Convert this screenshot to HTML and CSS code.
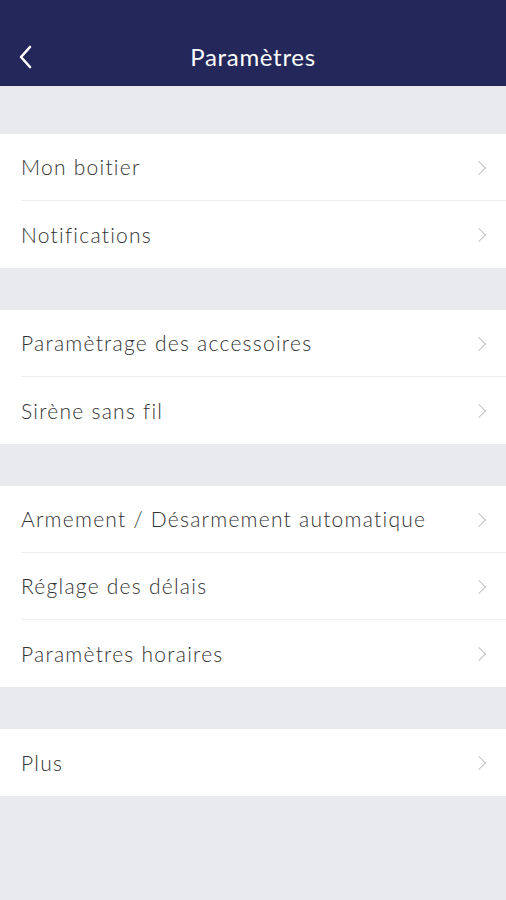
FILE: index.html
```html
<!DOCTYPE html>
<html lang="fr">

<head>
    <meta charset="UTF-8">
    <meta name="viewport" content="width=device-width, initial-scale=1.0">
    <title>Paramètres</title>
    <link rel="stylesheet" href="styles.css">
</head>

<body>
    <header class="nav-bar">
        <svg class="back" width="14" height="24" viewBox="0 0 14 24">
            <path d="M11 2 L2 12 L11 22" fill="none" stroke="#ffffff" stroke-width="2.6" stroke-linecap="round" stroke-linejoin="round"/>
        </svg>
        <h1>Paramètres</h1>
    </header>
    <main>
        <ul class="group">
            <li class="row"><span>Mon boitier</span><i class="chev"></i></li>
            <li class="row"><span>Notifications</span><i class="chev"></i></li>
        </ul>
        <ul class="group">
            <li class="row"><span>Paramètrage des accessoires</span><i class="chev"></i></li>
            <li class="row"><span>Sirène sans fil</span><i class="chev"></i></li>
        </ul>
        <ul class="group">
            <li class="row"><span>Armement / Désarmement automatique</span><i class="chev"></i></li>
            <li class="row"><span>Réglage des délais</span><i class="chev"></i></li>
            <li class="row"><span>Paramètres horaires</span><i class="chev"></i></li>
        </ul>
        <ul class="group">
            <li class="row"><span>Plus</span><i class="chev"></i></li>
        </ul>
    </main>
</body>

</html>
```

FILE: styles.css
```css
body {
    font-family: Lato, "Noto Sans", sans-serif;
    margin: 0;
    padding: 0;
    background-color: #e9eaee;
    height: 900px;
}

.nav-bar {
    background-color: #23275a;
    color: #ffffff;
    height: 86px;
    padding-top: 26px;
    box-sizing: border-box;
    display: flex;
    align-items: center;
    justify-content: center;
    position: relative;
}

.back {
    position: absolute;
    left: 19px;
    top: 45px;
}

h1 {
    margin: 0;
    font-size: 24px;
    font-weight: 400;
    letter-spacing: 0.7px;
}

main {
    padding-top: 48px;
}

.group {
    list-style: none;
    margin: 0 0 42px 0;
    padding: 0 0 0 21px;
    background-color: #ffffff;
}

.row {
    height: 67px;
    display: flex;
    align-items: center;
    justify-content: space-between;
    padding-right: 20px;
    padding-bottom: 1px;
    border-bottom: 1px solid #eeeef0;
    font-size: 21px;
    font-weight: 300;
    letter-spacing: 1.25px;
    color: #333333;
    box-sizing: border-box;
}

.row:last-child {
    border-bottom: none;
}

.chev {
    width: 9px;
    height: 9px;
    border-top: 1.5px solid #c2c2c6;
    border-right: 1.5px solid #c2c2c6;
    transform: rotate(45deg);
    margin-right: 2px;
    margin-top: 2px;
}
```
